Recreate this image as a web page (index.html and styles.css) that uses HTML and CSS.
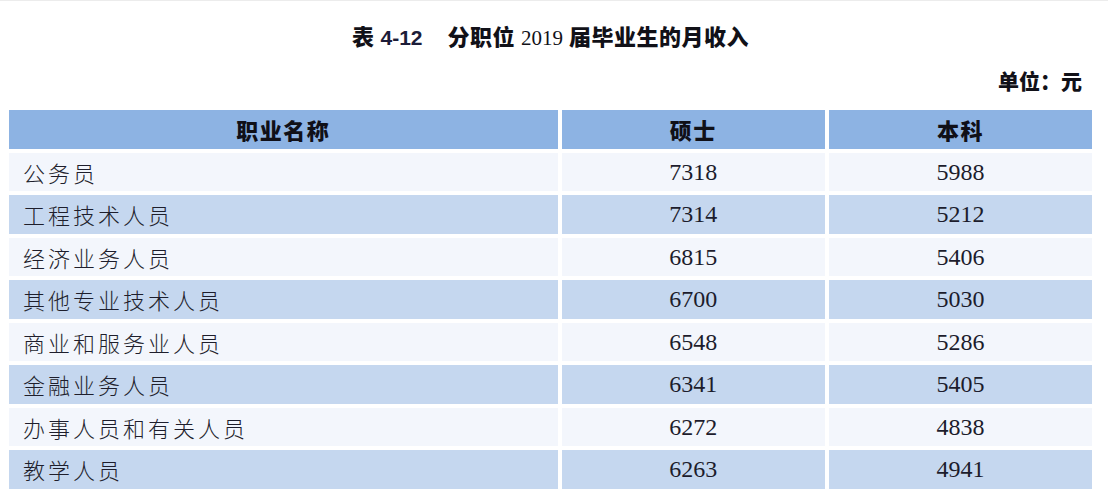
FILE: index.html
```html
<!DOCTYPE html>
<html lang="zh-CN">
<head>
<meta charset="utf-8">
<title>分职位 2019 届毕业生的月收入</title>
<link rel="stylesheet" href="styles.css">
</head>
<body>
<div class="page">
  <div class="title">
    <span class="cap">表</span><span class="num">4-12</span><span class="sep"></span><span class="cap">分职位</span><span class="year">2019</span><span class="cap">届毕业生的月收入</span>
  </div>
  <div class="unit">单位：元</div>
  <div class="table">
    <div class="cell head">职业名称</div>
    <div class="cell head">硕士</div>
    <div class="cell head">本科</div>

    <div class="cell name light">公务员</div>
    <div class="cell val light">7318</div>
    <div class="cell val light">5988</div>

    <div class="cell name blue">工程技术人员</div>
    <div class="cell val blue">7314</div>
    <div class="cell val blue">5212</div>

    <div class="cell name light">经济业务人员</div>
    <div class="cell val light">6815</div>
    <div class="cell val light">5406</div>

    <div class="cell name blue">其他专业技术人员</div>
    <div class="cell val blue">6700</div>
    <div class="cell val blue">5030</div>

    <div class="cell name light">商业和服务业人员</div>
    <div class="cell val light">6548</div>
    <div class="cell val light">5286</div>

    <div class="cell name blue">金融业务人员</div>
    <div class="cell val blue">6341</div>
    <div class="cell val blue">5405</div>

    <div class="cell name light">办事人员和有关人员</div>
    <div class="cell val light">6272</div>
    <div class="cell val light">4838</div>

    <div class="cell name blue">教学人员</div>
    <div class="cell val blue">6263</div>
    <div class="cell val blue">4941</div>
  </div>
</div>
</body>
</html>
```
FILE: styles.css
```css
html, body {
  margin: 0;
  padding: 0;
  background: #ffffff;
}

body {
  width: 1108px;
  height: 498px;
  overflow: hidden;
  border-top: 1px solid #ececec;
  box-sizing: border-box;
  color: #1c1c28;
  font-family: "Noto Sans CJK SC", "Liberation Sans", sans-serif;
}

.page {
  width: 1083px;
  padding-left: 9px;
}

.title {
  margin-top: 20px;
  height: 28px;
  line-height: 28px;
  display: flex;
  justify-content: center;
  align-items: baseline;
  font-size: 22px;
  font-weight: 900;
  letter-spacing: 0.5px;
  color: #111118;
}

.title .num {
  font-family: "Liberation Sans", "Noto Sans CJK SC", sans-serif;
  font-weight: 700;
  font-size: 21px;
  letter-spacing: 0;
  margin-left: 6px;
  color: #1c1c38;
}

.title .sep {
  display: inline-block;
  width: 25px;
}

.title .year {
  font-family: "Liberation Serif", serif;
  font-weight: 400;
  font-size: 21px;
  letter-spacing: 0;
  margin: 0 6px;
}

.unit {
  margin-top: 18px;
  height: 26px;
  line-height: 26px;
  text-align: right;
  padding-right: 10px;
  font-size: 21px;
  font-weight: 900;
  color: #111118;
}

.table {
  margin-top: 17px;
  display: grid;
  grid-template-columns: 548.5px 263.5px 263px;
  column-gap: 4px;
  row-gap: 4px;
}

.cell {
  height: 38.5px;
  display: flex;
  align-items: center;
  box-sizing: border-box;
}

.head {
  background: #8db3e3;
  justify-content: center;
  font-size: 22px;
  font-weight: 900;
  letter-spacing: 1.5px;
  color: #101018;
  padding-bottom: 1px;
}

.light {
  background: #f3f6fc;
}

.blue {
  background: #c5d7ef;
}

.name {
  padding-left: 14px;
  font-size: 22px;
  font-weight: 300;
  letter-spacing: 3px;
  color: #1e1e2c;
}

.val {
  justify-content: center;
  font-family: "Liberation Serif", serif;
  font-size: 24px;
  color: #1c1c2c;
  padding-top: 1px;
}
```
